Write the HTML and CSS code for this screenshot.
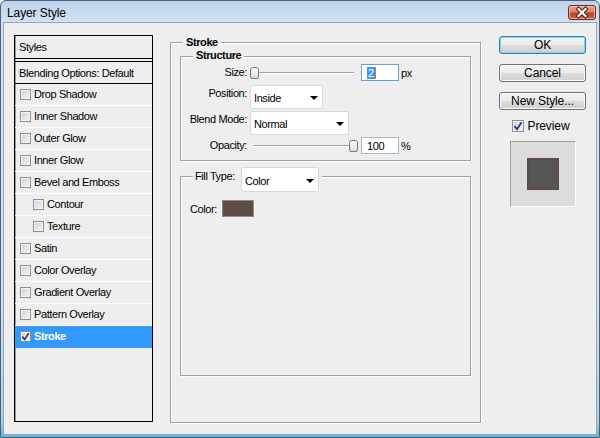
FILE: index.html
```html
<!DOCTYPE html>
<html>
<head>
<meta charset="utf-8">
<title>Layer Style</title>
<link rel="stylesheet" href="styles.css">
</head>
<body>
<div class="window">
  <div class="titlebar">
    <span class="title">Layer Style</span>
    <div class="close">
      <svg width="26" height="13" viewBox="0 0 26 13">
        <path d="M9.5 3 L16.5 10 M16.5 3 L9.5 10" stroke="#5a1a10" stroke-width="4.2" stroke-linecap="square"/>
        <path d="M9.5 3 L16.5 10 M16.5 3 L9.5 10" stroke="#ffffff" stroke-width="2.2" stroke-linecap="square"/>
      </svg>
    </div>
  </div>
  <div class="client">
    <div class="list">
      <div class="list-head">Styles</div>
      <div class="list-blend">Blending Options: Default</div>
      <div class="item"><span class="cb"></span>Drop Shadow</div>
      <div class="item"><span class="cb"></span>Inner Shadow</div>
      <div class="item"><span class="cb"></span>Outer Glow</div>
      <div class="item"><span class="cb"></span>Inner Glow</div>
      <div class="item"><span class="cb"></span>Bevel and Emboss</div>
      <div class="item sub"><span class="cb"></span>Contour</div>
      <div class="item sub"><span class="cb"></span>Texture</div>
      <div class="item"><span class="cb"></span>Satin</div>
      <div class="item"><span class="cb"></span>Color Overlay</div>
      <div class="item"><span class="cb"></span>Gradient Overlay</div>
      <div class="item"><span class="cb"></span>Pattern Overlay</div>
      <div class="item selected"><span class="cb"><svg width="9" height="9" viewBox="0 0 9 9"><path d="M1.3 4.6 L3.6 7.4 L7.8 1.2" fill="none" stroke="#1f3a9a" stroke-width="1.7"/></svg></span>Stroke</div>
    </div>

    <div class="main">
      <div class="group stroke">
        <div class="legend">Stroke</div>
        <div class="group structure">
          <div class="legend">Structure</div>
          <div class="row row-size">
            <span class="lbl">Size:</span>
            <div class="slider"><span class="thumb"></span></div>
            <div class="input focused"><span class="sel">2</span></div>
            <span class="unit">px</span>
          </div>
          <div class="row row-sel row-pos">
            <span class="lbl">Position:</span>
            <div class="select w-pos"><span>Inside</span><i class="arrow"></i></div>
          </div>
          <div class="row row-sel row-blend">
            <span class="lbl">Blend Mode:</span>
            <div class="select w-blend"><span>Normal</span><i class="arrow"></i></div>
          </div>
          <div class="row row-op">
            <span class="lbl">Opacity:</span>
            <div class="slider end"><span class="thumb"></span></div>
            <div class="input"><span>100</span></div>
            <span class="unit">%</span>
          </div>
        </div>
        <div class="group fill">
          <div class="legend legend-fill">
            <span class="fill-lbl">Fill Type:</span>
            <div class="select w-fill"><span>Color</span><i class="arrow"></i></div>
          </div>
          <div class="color-row">
            <span class="color-lbl">Color:</span>
            <span class="swatch"></span>
          </div>
        </div>
      </div>
    </div>

    <div class="side">
      <button class="btn default">OK</button>
      <button class="btn">Cancel</button>
      <button class="btn">New Style...</button>
      <div class="preview-row">
        <span class="cb big"><svg width="10" height="10" viewBox="0 0 9 9"><path d="M1.3 4.6 L3.6 7.4 L7.8 1.2" fill="none" stroke="#1f3a9a" stroke-width="1.6"/></svg></span>
        <span>Preview</span>
      </div>
      <div class="preview-box"><div class="preview-sq"></div></div>
    </div>
  </div>
</div>
</body>
</html>
```

FILE: styles.css
```css
* { box-sizing: border-box; }
html, body { margin: 0; padding: 0; }
body {
  width: 600px;
  height: 438px;
  overflow: hidden;
  background: #ffffff;
  font-family: "Liberation Sans", Arial, sans-serif;
  font-size: 11px;
  letter-spacing: -0.4px;
  color: #000;
}

.window {
  width: 600px;
  height: 438px;
  display: flex;
  flex-direction: column;
  border: 1px solid #4d6279;
  border-radius: 6px 6px 0 0;
  background: linear-gradient(to bottom, #bdd2ea 0, #d3e2f2 22px, #cfdff0 300px, #9fd6ee 420px, #4fb8e2 436px);
}

.titlebar {
  height: 21px;
  display: flex;
  justify-content: space-between;
  align-items: flex-start;
  padding: 0 3px 0 6px;
}
.title {
  font-size: 12px;
  letter-spacing: -0.1px;
  line-height: 14px;
  margin-top: 5px;
}
.close {
  width: 28px;
  height: 15px;
  margin-top: 4px;
  border: 1px solid #6b2a1c;
  border-radius: 3px;
  background: linear-gradient(to bottom, #e9a899 0, #d8806b 45%, #c2442a 55%, #d3653f 100%);
  box-shadow: inset 0 0 0 1px rgba(255,220,210,0.6);
  display: flex;
  align-items: center;
  justify-content: center;
}

.client {
  flex: 1;
  margin: 0 2px 2px;
  background: #eeeeee;
  border: 1px solid #93a6bb;
  display: flex;
  align-items: flex-start;
  padding: 12px 0 0 10px;
}

/* list */
.list {
  width: 139px;
  height: 387px;
  border: 1px solid #000;
  background: #eeeeee;
  box-shadow: inset 1px 0 0 #9a9a9a;
}
.list-head {
  height: 23px;
  border-bottom: 1px solid #000;
  padding-left: 4px;
  display: flex;
  align-items: center;
}
.list-blend {
  margin-top: 2px;
  height: 23px;
  border-top: 1px solid #000;
  border-bottom: 1px solid #000;
  padding-left: 4px;
  display: flex;
  align-items: center;
}
.item {
  height: 22px;
  border-bottom: 1px solid #ffffff;
  display: flex;
  align-items: center;
  padding-left: 5px;
  padding-bottom: 1px;
}
.item.sub { padding-left: 18px; }
.item.selected {
  background: #3399ff;
  color: #fff;
  font-weight: bold;
  border-bottom-color: #3399ff;
}
.cb {
  width: 11px;
  height: 11px;
  margin-right: 3px;
  border: 1px solid #8e8f8f;
  background: linear-gradient(135deg, #cfcfcf, #f6f6f6);
  box-shadow: inset 0 0 0 1px #f2f2f2;
  display: flex;
  align-items: center;
  justify-content: center;
  flex: none;
}
.cb.big { width: 12px; height: 12px; margin-right: 4px; }

/* main */
.main {
  margin-left: 17px;
  margin-top: 7px;
  width: 311px;
}
.group {
  border: 1px solid #a0a0a0;
  box-shadow: inset 1px 1px 0 #ffffff, 1px 1px 0 #ffffff;
}
.stroke { height: 381px; }
.legend {
  display: block;
  width: fit-content;
  margin: -8px 0 0 12px;
  padding: 0 3px;
  background: #eeeeee;
  font-weight: bold;
  line-height: 14px;
}
.structure { margin: 7px 9px 0; height: 105px; }
.structure > .legend { margin-top: -9px; }

.row { display: flex; align-items: center; }
.lbl {
  width: 66px;
  text-align: right;
  margin-right: 3px;
  line-height: 13px;
  flex: none;
}
.row-size { margin-top: 2px; height: 17px; }
.row-sel { align-items: flex-start; }
.row-sel .lbl { margin-top: 2px; }
.row-pos { margin-top: 4px; }
.row-blend { margin-top: 2px; }
.row-op { margin-top: 2px; height: 17px; }

.slider {
  width: 108px;
  height: 12px;
  margin-right: 3px;
  display: flex;
  background: linear-gradient(to bottom, #a3a3a3 0, #a3a3a3 1px, #ffffff 1px, #ffffff 2px) no-repeat center / calc(100% - 8px) 2px;
}
.slider.end { justify-content: flex-end; }
.thumb {
  width: 9px;
  height: 12px;
  border: 1px solid #7b7b7b;
  border-radius: 3px 3px 2px 2px;
  background: linear-gradient(to bottom, #fdfdfd, #dcdcdc);
}
.input {
  width: 38px;
  height: 17px;
  border: 1px solid #abb6c4;
  background: #fff;
  padding-left: 5px;
  display: flex;
  align-items: center;
}
.input.focused { border-color: #6a9fd4; }
.sel {
  background: #3399ff;
  color: #fff;
  line-height: 12px;
  padding: 0 1px;
  border-right: 1px solid #d8732a;
}
.unit { margin-left: 2px; }

.select {
  height: 24px;
  border: 1px solid #d2dbe5;
  border-radius: 2px;
  background: #fff;
  display: flex;
  align-items: center;
  justify-content: space-between;
  padding: 2px 4px 0 3px;
}
.w-pos { width: 73px; }
.w-blend { width: 99px; }
.w-fill { width: 78px; height: 25px; }
.arrow {
  width: 0;
  height: 0;
  border-left: 4px solid transparent;
  border-right: 4px solid transparent;
  border-top: 4px solid #000;
}

.fill { margin: 15px 9px 0; height: 200px; }
.legend-fill {
  display: flex;
  align-items: flex-start;
  margin-top: -10px;
  padding: 0 3px 0 2px;
  font-weight: normal;
}
.fill-lbl { width: 46px; margin-top: 3px; line-height: 13px; }
.color-row {
  display: flex;
  align-items: center;
  margin-top: 8px;
  padding-left: 9px;
}
.color-lbl { width: 32px; }
.swatch {
  width: 32px;
  height: 17px;
  border: 1px solid #8c8c8c;
  background: #5e4b43;
}

/* side */
.side {
  margin-left: 18px;
  margin-top: 1px;
  width: 87px;
  display: flex;
  flex-direction: column;
  align-items: center;
}
.btn {
  width: 87px;
  height: 18px;
  padding: 0;
  border: 1px solid #707070;
  border-radius: 3px;
  background: linear-gradient(to bottom, #f3f3f3 0, #ebebeb 50%, #dddddd 50%, #cfcfcf 100%);
  box-shadow: inset 0 0 0 1px #fbfbfb;
  font-family: "Liberation Sans", Arial, sans-serif;
  font-size: 12px;
  letter-spacing: -0.1px;
  color: #000;
  line-height: 14px;
}
.btn + .btn { margin-top: 10px; }
.btn.default {
  border-color: #3c7fb1;
  box-shadow: inset 0 0 0 1px #7ed3f7;
}
.preview-row {
  margin-top: 9px;
  margin-left: -4px;
  display: flex;
  align-items: center;
  font-size: 12px;
  letter-spacing: -0.1px;
}
.preview-box {
  margin-top: 8px;
  width: 66px;
  height: 66px;
  border: 1px solid;
  border-color: #a0a0a0 #ffffff #ffffff #a0a0a0;
  background: #dcdcdc;
  display: flex;
  align-items: center;
  justify-content: center;
}
.preview-sq {
  width: 32px;
  height: 32px;
  border: 2px solid #5d4a42;
  background: #555555;
}
```
